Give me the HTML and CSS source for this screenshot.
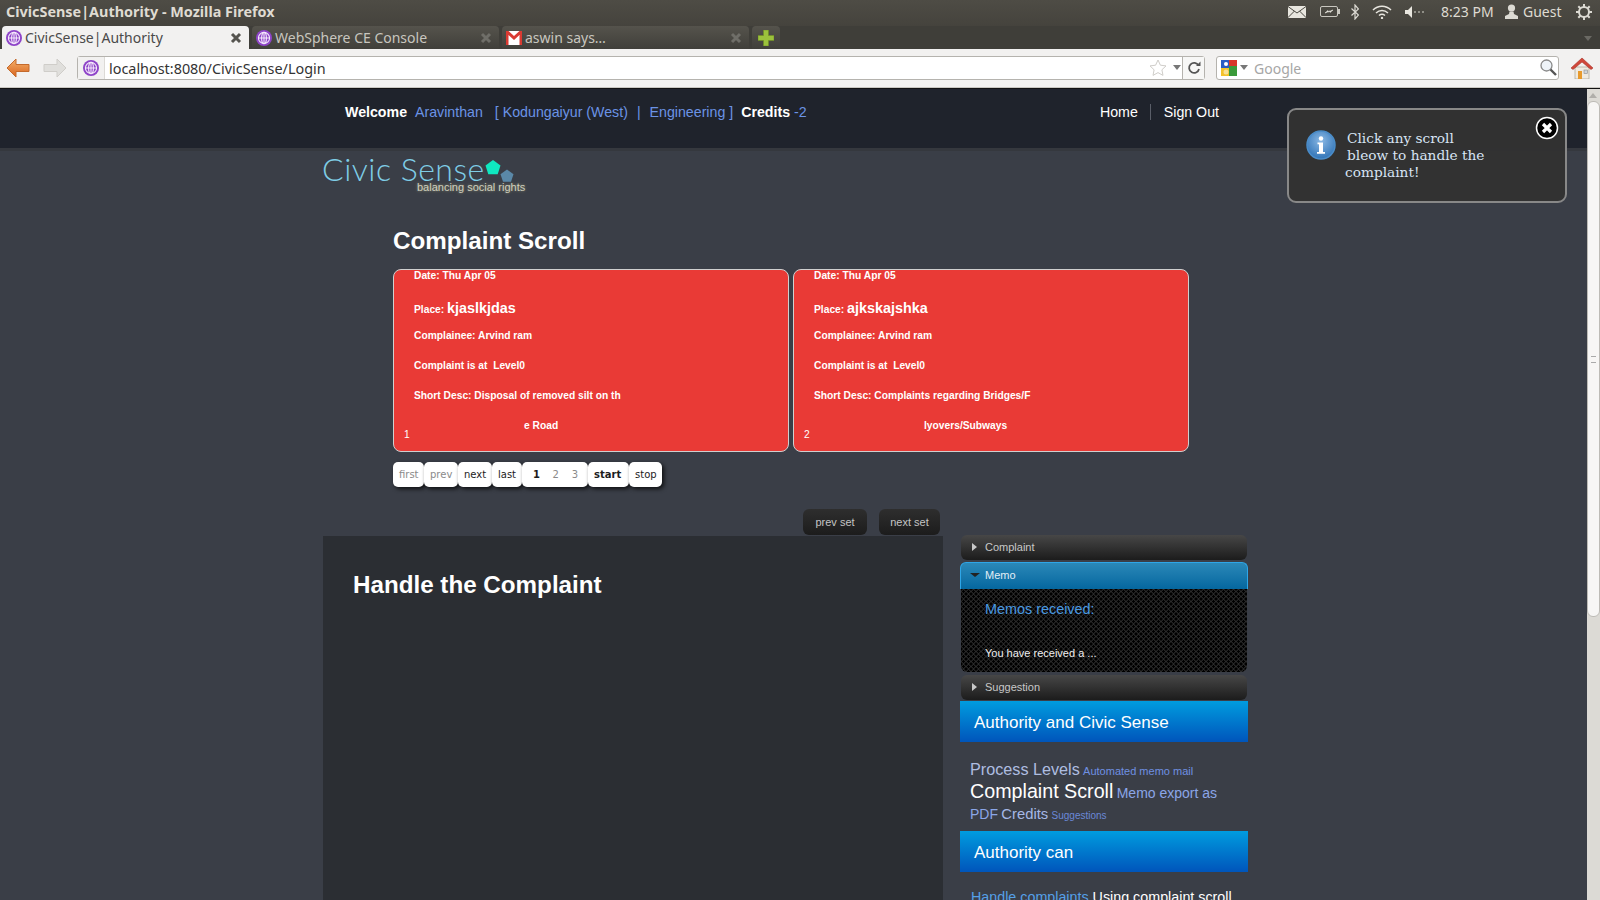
FILE: index.html
```html
<!DOCTYPE html>
<html lang="en">
<head>
    <meta charset="UTF-8">
    <meta name="viewport" content="width=device-width, initial-scale=1.0">
    <title>CivicSense|Authority</title>
    <link rel="stylesheet" href="styles.css">
</head>
<body>
    <svg class="defs" width="0" height="0">
        <symbol id="globe" viewBox="0 0 16 16">
            <circle cx="8" cy="8" r="8" fill="#8e44c8"/>
            <circle cx="8" cy="8" r="5.6" fill="none" stroke="#f4e8fb" stroke-width="1.1"/>
            <ellipse cx="8" cy="8" rx="2.4" ry="5.6" fill="none" stroke="#f4e8fb" stroke-width="1.1"/>
            <path d="M2.4 8h11.2M8 2.4v11.2" stroke="#f4e8fb" stroke-width="1.1"/>
        </symbol>
        <symbol id="closer" viewBox="0 0 12 12">
            <path d="M2 2l8 8M10 2l-8 8" stroke="currentColor" stroke-width="3"/>
        </symbol>
    </svg>

    <!-- desktop panel + window title -->
    <div class="titlebar">
        <span class="window-title">CivicSense|Authority - Mozilla Firefox</span>
        <div class="tray">
            <svg class="tray-mail" width="18" height="12" viewBox="0 0 18 12"><rect width="18" height="12" rx="1" fill="#e8e6df"/><path d="M0 .5l9 6.5 9-6.5M0 11.5l6.5-6.5M18 11.5l-6.5-6.5" fill="none" stroke="#4a4842"/></svg>
            <svg class="tray-batt" width="20" height="11" viewBox="0 0 20 11"><rect x=".5" y=".5" width="17" height="10" rx="1.5" fill="none" stroke="#c8c6bf"/><rect x="18" y="3" width="2" height="5" fill="#c8c6bf"/><path d="M5 7l5-2v1.500l3-2.500-5 2v-1.500z" fill="#e8e6df" stroke="#e8e6df" stroke-width=".6"/></svg>
            <svg class="tray-bt" width="8" height="16" viewBox="0 0 8 16"><path d="M.5 4.500l7 6.500-3.500 4v-14l3.500 4-7 6.500" fill="none" stroke="#dcdad3" stroke-width="1.200"/></svg>
            <svg class="tray-wifi" width="20" height="14" viewBox="0 0 20 14"><path d="M1 5c5-5 13-5 18 0M4 8c3.500-3.300 8.500-3.300 12 0M7 10.500c1.800-1.500 4.200-1.500 6 0" fill="none" stroke="#e8e6df" stroke-width="1.500"/><circle cx="10" cy="13" r="1.200" fill="#e8e6df"/></svg>
            <svg class="tray-vol" width="20" height="12" viewBox="0 0 20 12"><path d="M0 4h3l4-4v12l-4-4H0z" fill="#e8e6df"/><path d="M9 6h2M13 6h2M17 6h2" stroke="#a8a69f" stroke-width="1.300"/></svg>
            <span class="tray-time">8:23 PM</span>
            <svg class="tray-user" width="13" height="15" viewBox="0 0 13 15"><circle cx="6.500" cy="4" r="3.600" fill="#dcdad3"/><path d="M4.500 7.500h4l.5 2.500 4 2v3H0v-3l4-2z" fill="#dcdad3"/></svg>
            <span class="tray-guest">Guest</span>
            <svg class="tray-gear" width="16" height="16" viewBox="0 0 16 16"><circle cx="8" cy="8" r="5" fill="none" stroke="#dcdad3" stroke-width="2"/><path d="M8 0v3M8 13v3M0 8h3M13 8h3M2.300 2.300l2 2M11.700 11.700l2 2M13.700 2.300l-2 2M4.300 11.700l-2 2" stroke="#dcdad3" stroke-width="2"/></svg>
        </div>
    </div>

    <div class="tabbar">
        <div class="tab tab-active">
            <svg class="favicon" width="16" height="16"><use href="#globe"/></svg>
            <span class="tab-label">CivicSense|Authority</span>
            <svg class="tab-close" width="12" height="12"><use href="#closer"/></svg>
        </div>
        <div class="tab">
            <svg class="favicon" width="16" height="16"><use href="#globe"/></svg>
            <span class="tab-label">WebSphere CE Console</span>
            <svg class="tab-close" width="12" height="12"><use href="#closer"/></svg>
        </div>
        <div class="tab tab-mail">
            <svg class="favicon" width="16" height="14" viewBox="0 0 16 14"><rect width="16" height="14" fill="#fff"/><path d="M0 0h2.500L8 5l5.500-5H16v14h-2.500V4L8 9 2.500 4v10H0z" fill="#d93a32"/></svg>
            <span class="tab-label">aswin says…</span>
            <svg class="tab-close" width="12" height="12"><use href="#closer"/></svg>
        </div>
        <div class="tab-new">
            <svg width="16" height="16" viewBox="0 0 16 16"><path d="M5.500 0h5v5.500H16v5h-5.500V16h-5v-5.500H0v-5h5.500z" fill="#9cc23c" stroke="#6e8f22" stroke-width=".6"/></svg>
        </div>
        <span class="tab-list"></span>
    </div>

    <div class="navbar">
        <svg class="nav-back" width="24" height="20" viewBox="0 0 24 20"><defs><linearGradient id="arrowFill" x1="0" y1="0" x2="0" y2="1"><stop offset="0" stop-color="#f4b06a"/><stop offset="1" stop-color="#d9641e"/></linearGradient></defs><path d="M10 1L1 10l9 9v-5.500h13v-7H10z" fill="url(#arrowFill)" stroke="#c46a2c" stroke-linejoin="round"/></svg>
        <svg class="nav-forward" width="24" height="20" viewBox="0 0 24 20"><path d="M14 1l9 9-9 9v-5.500H1v-7h13z" fill="#e0dfdc" stroke="#cfcdc9" stroke-linejoin="round"/></svg>
        <div class="urlbar">
            <span class="url-site"><svg width="16" height="16"><use href="#globe"/></svg></span>
            <span class="url-text">localhost:8080/CivicSense/Login</span>
            <svg class="url-star" width="18" height="17" viewBox="0 0 18 17"><path d="M9 1l2.400 5.200 5.600.7-4.100 3.900 1.100 5.600L9 13.600l-5 2.800 1.100-5.600L1 6.900l5.600-.7z" fill="#fff" stroke="#cfcdc9"/></svg>
            <span class="drop-arrow"></span>
            <span class="url-reload">
                <svg width="14" height="14" viewBox="0 0 14 14"><path d="M11.500 4.500A5 5 0 1 0 12 8" fill="none" stroke="#555" stroke-width="1.800"/><path d="M9 5h4.500V.5z" fill="#555"/></svg>
            </span>
        </div>
        <div class="searchbar">
            <svg class="search-engine" width="16" height="16" viewBox="0 0 16 16"><rect width="8" height="8" fill="#2a5cc4"/><rect x="8" width="8" height="6" fill="#d8362a"/><rect x="8" y="6" width="8" height="10" fill="#3a9a3a"/><rect y="8" width="8" height="8" fill="#f4c22c"/><circle cx="5" cy="4" r="2" fill="#fff"/><circle cx="5" cy="12" r="2.500" fill="#fff" opacity=".5"/></svg>
            <span class="drop-arrow"></span>
            <span class="search-text">Google</span>
            <svg class="search-icon" width="17" height="17" viewBox="0 0 17 17"><circle cx="6.500" cy="6.500" r="5.500" fill="#eef3f8" stroke="#8a8a8a" stroke-width="1.300"/><path d="M10.500 10.500l5.500 5.500" stroke="#555" stroke-width="2.400"/></svg>
        </div>
        <svg class="nav-home" width="22" height="22" viewBox="0 0 22 22"><path d="M4 10h14v12H4z" fill="#efeae0" stroke="#a8a294" stroke-width=".7"/><rect x="7" y="14" width="4" height="8" fill="#e89a2c"/><rect x="13" y="13" width="3.500" height="3.500" fill="#cfd4d8" stroke="#8a8a8a" stroke-width=".6"/><path d="M0 11L11 1l11 10-2 1.500L11 5l-9 7.500z" fill="#d0473a" stroke="#a83228" stroke-width=".6"/></svg>
    </div>

    <div class="viewport">
        <div class="page">
            <header class="topbar">
                <div class="topbar-inner">
                    <div class="user-info">
                        <b>Welcome</b>
                        <a class="link user-name">Aravinthan</a>
                        <a class="link user-ward">[ Kodungaiyur (West)</a>
                        <a class="link user-sep">|</a>
                        <a class="link user-dept">Engineering ]</a>
                        <b class="credits">Credits</b>
                        <a class="link user-credits">-2</a>
                    </div>
                    <nav class="top-links">
                        <a>Home</a>
                        <span class="top-sep"></span>
                        <a>Sign Out</a>
                    </nav>
                </div>
            </header>

            <div class="content">
                <div class="logo">
                    <span class="logo-name">Civic Sense</span>
                    <svg class="logo-mark" width="36" height="26" viewBox="0 0 36 26"><path d="M8 1l7.500 5.500-2.800 8.800H3.300L.5 6.500z" fill="#0fe8c0"/><path d="M22 10.500l6.500 4.700-2.500 7.600h-8l-2.500-7.600z" fill="#5a88a8"/></svg>
                    <span class="logo-tag">balancing social rights</span>
                </div>

                <section class="scroll-section">
                    <h2 class="scroll-title">Complaint Scroll</h2>
                    <div class="scroll-cards">
                        <article class="scroll-card">
                            <p class="card-date">Date: Thu Apr 05</p>
                            <p class="card-place">Place: <strong>kjaslkjdas</strong></p>
                            <p>Complainee: Arvind ram</p>
                            <p>Complaint is at &nbsp;Level0</p>
                            <p>Short Desc: Disposal of removed silt on th</p>
                            <p class="card-wrap">e Road</p>
                            <span class="card-num">1</span>
                        </article>
                        <article class="scroll-card">
                            <p class="card-date">Date: Thu Apr 05</p>
                            <p class="card-place">Place: <strong>ajkskajshka</strong></p>
                            <p>Complainee: Arvind ram</p>
                            <p>Complaint is at &nbsp;Level0</p>
                            <p>Short Desc: Complaints regarding Bridges/F</p>
                            <p class="card-wrap">lyovers/Subways</p>
                            <span class="card-num">2</span>
                        </article>
                    </div>
                    <div class="pager">
                        <a class="pg pg-off">first</a>
                        <a class="pg pg-off">prev</a>
                        <a class="pg">next</a>
                        <a class="pg">last</a>
                        <span class="pg pg-nums">
                            <b>1</b>
                            <i>2</i>
                            <i>3</i>
                        </span>
                        <a class="pg pg-start">start</a>
                        <a class="pg">stop</a>
                    </div>
                </section>

                <div class="set-buttons">
                    <button class="set-btn set-prev">prev set</button>
                    <button class="set-btn set-next">next set</button>
                </div>

                <div class="lower">
                    <main class="handle-panel">
                        <h2>Handle the Complaint</h2>
                    </main>
                    <aside class="sidebar">
                        <div class="acc-head"><span class="tri-right"></span>Complaint</div>
                        <div class="acc-head acc-open"><span class="tri-down"></span>Memo</div>
                        <div class="acc-body">
                            <h4>Memos received:</h4>
                            <p>You have received a ...</p>
                        </div>
                        <div class="acc-head acc-last"><span class="tri-right"></span>Suggestion</div>

                        <h3 class="side-title">Authority and Civic Sense</h3>
                        <div class="tag-cloud">
                            <a class="tag-md">Process Levels</a>
                            <a class="tag-xs">Automated memo mail</a>
                            <a class="tag-lg">Complaint Scroll</a>
                            <a class="tag-sm">Memo export as PDF</a>
                            <a class="tag-cr">Credits</a>
                            <a class="tag-xxs">Suggestions</a>
                        </div>

                        <h3 class="side-title">Authority can</h3>
                        <p class="can-list"><a>Handle complaints</a> Using complaint scroll</p>
                    </aside>
                </div>
            </div>

            <div class="notice">
                <svg class="notice-icon" width="30" height="30" viewBox="0 0 30 30"><defs><radialGradient id="infoFill" cx=".5" cy=".35" r=".7"><stop offset="0" stop-color="#8ab8e4"/><stop offset="1" stop-color="#2a6fb4"/></radialGradient></defs><circle cx="15" cy="15" r="14" fill="url(#infoFill)" stroke="#4a8cc8" stroke-width="1.500"/><circle cx="15" cy="8.500" r="2.200" fill="#fff"/><path d="M11.500 12.500h5.500v9.500h2v1.800h-8V22h2v-7.700h-1.500z" fill="#fff"/></svg>
                <div class="notice-text">
                    <span class="notice-line">Click any scroll</span>
                    <span class="notice-line">bleow to handle the</span>
                    <span>complaint!</span>
                </div>
                <svg class="notice-close" width="24" height="24" viewBox="0 0 24 24"><circle cx="12" cy="12" r="10.500" fill="#000" stroke="#fff" stroke-width="1.500"/><path d="M8 8l8 8M16 8l-8 8" stroke="#fff" stroke-width="3.200"/></svg>
            </div>
        </div>

        <div class="scrollbar">
            <span class="scroll-up"></span>
            <div class="scroll-thumb"><span class="scroll-grip"></span></div>
        </div>
    </div>
</body>
</html>
```

FILE: styles.css
```css
* {
    margin: 0;
    padding: 0;
    box-sizing: border-box;
}

body {
    width: 1600px;
    height: 900px;
    overflow: hidden;
    display: flex;
    flex-direction: column;
    font-family: 'Liberation Sans', Arial, sans-serif;
    background-color: #3a3e47;
}

.defs {
    position: absolute;
}

/* ---- browser chrome ---- */
.titlebar {
    height: 26px;
    display: flex;
    justify-content: space-between;
    align-items: center;
    padding: 0 0 3px 6px;
    background: linear-gradient(#4e4c45, #45433d);
}

.window-title {
    font-family: 'Noto Sans', sans-serif;
    font-size: 14.4px;
    font-weight: 700;
    color: #dfdbd2;
}

.tray {
    display: flex;
    align-items: center;
    font-family: 'Noto Sans', sans-serif;
    font-size: 14px;
    color: #dfdbd2;
}

.tray-mail { margin-right: 14px; }
.tray-batt { margin-right: 11px; }
.tray-bt { margin-right: 13px; }
.tray-wifi { margin-right: 13px; }
.tray-vol { margin-right: 16px; }
.tray-time { width: 64px; }
.tray-user { margin-right: 5px; }
.tray-guest { width: 53px; }
.tray-gear { margin-right: 8px; }

.tabbar {
    height: 23px;
    display: flex;
    gap: 3px;
    padding-left: 2px;
    position: relative;
    background-color: #3f3e39;
}

.tab {
    width: 247px;
    display: flex;
    align-items: center;
    gap: 3px;
    padding: 0 7px 0 4px;
    border-radius: 4px 4px 0 0;
    background: linear-gradient(#55534c, #403f3a);
    font-family: 'Noto Sans', sans-serif;
    font-size: 14px;
    color: #c8c6bf;
}

.tab-active {
    background: #f2f1f0;
    color: #4a4a4a;
}

.tab-label {
    flex: 1;
    white-space: nowrap;
}

.tab-close {
    color: #6f6e68;
}

.tab-active .tab-close {
    color: #55544f;
}

.tab-new {
    width: 28px;
    display: flex;
    align-items: center;
    justify-content: center;
    border-radius: 4px 4px 0 0;
    background: linear-gradient(#55534c, #403f3a);
}

.tab-list {
    position: absolute;
    right: 8px;
    top: 10px;
    border-left: 4px solid transparent;
    border-right: 4px solid transparent;
    border-top: 5px solid #6a6963;
}

.navbar {
    height: 39px;
    display: flex;
    align-items: center;
    padding: 0 7px 1px 6px;
    background-color: #f2f1f0;
    border-bottom: 1px solid #c9c7c2;
}

.nav-back { margin-right: 13px; }
.nav-forward { margin-right: 10px; }

.urlbar,
.searchbar {
    height: 24px;
    display: flex;
    align-items: center;
    background-color: #fff;
    border: 1px solid #b5b3ae;
    border-radius: 3px;
}

.urlbar {
    width: 1128px;
    margin-right: 11px;
}

.url-site {
    width: 27px;
    height: 100%;
    display: flex;
    align-items: center;
    justify-content: center;
    background-color: #f2f1f0;
    border-right: 1px solid #dcdad6;
}

.url-text {
    flex: 1;
    padding: 1px 0 0 4px;
    font-family: 'Noto Sans', sans-serif;
    font-size: 14.4px;
    color: #333;
}

.url-star { margin-right: 6px; }

.drop-arrow {
    border-left: 4px solid transparent;
    border-right: 4px solid transparent;
    border-top: 5px solid #777;
}

.url-reload {
    width: 22px;
    height: 100%;
    margin-left: 1px;
    display: flex;
    align-items: center;
    justify-content: center;
    border-left: 1px solid #b5b3ae;
    background-color: #f7f7f6;
}

.searchbar {
    width: 343px;
    padding: 0 1px 0 4px;
    margin-right: 12px;
}

.search-engine { margin-right: 3px; }

.search-text {
    flex: 1;
    padding: 1px 0 0 6px;
    font-family: 'Noto Sans', sans-serif;
    font-size: 14px;
    color: #a6a6a6;
}

/* ---- page ---- */
.viewport {
    flex: 1;
    min-height: 0;
    display: flex;
    border-top: 1px solid #111;
}

.page {
    flex: 1;
    position: relative;
    overflow: hidden;
    background-color: #3a3e47;
}

.topbar {
    height: 62px;
    background-color: #1f232c;
    border-bottom: 3px solid #35383e;
}

.topbar-inner {
    width: 874px;
    margin-left: 345px;
    height: 46px;
    display: flex;
    justify-content: space-between;
    align-items: center;
    font-size: 14.2px;
    color: #fff;
}

.user-info {
    display: flex;
    align-items: center;
    white-space: nowrap;
}

.link {
    color: #6b93e6;
}

.user-name { margin-left: 8px; }
.user-ward { margin-left: 12px; }
.user-sep { margin-left: 9px; }
.user-dept { margin-left: 9px; }
.credits { margin-left: 8px; }
.user-credits { margin-left: 4px; }

.top-links {
    display: flex;
    align-items: center;
}

.top-sep {
    width: 1px;
    height: 16px;
    margin: 0 12.5px;
    background-color: #5a5e68;
}

.content {
    width: 925px;
    margin-left: 323px;
}

.logo {
    height: 75px;
    position: relative;
}

.logo-name {
    position: absolute;
    left: -1px;
    top: -2px;
    font-family: 'Lato', sans-serif;
    font-size: 32px;
    font-weight: 300;
    letter-spacing: .5px;
    color: #7fcde6;
}

.logo-mark {
    position: absolute;
    left: 162px;
    top: 8px;
}

.logo-tag {
    position: absolute;
    left: 94px;
    top: 30px;
    font-size: 11px;
    color: #cfcfbf;
    text-shadow: 0 0 3px #8f8f70;
}

.scroll-section {
    margin-left: 70px;
}

.scroll-title {
    font-size: 24.2px;
    line-height: 30px;
    color: #fff;
    margin-bottom: 13px;
}

.scroll-cards {
    display: flex;
    gap: 4px;
}

.scroll-card {
    width: 396px;
    height: 183px;
    position: relative;
    overflow: hidden;
    padding: 1px 20px 0;
    background-color: #e93a36;
    border: 1px solid #cfcfcf;
    border-radius: 8px;
    font-size: 10.25px;
    font-weight: 700;
    line-height: 10px;
    color: #fff;
}

.scroll-card p {
    margin-bottom: 20px;
}

.scroll-card .card-date {
    margin-bottom: 18px;
}

.scroll-card .card-place {
    line-height: 18px;
    margin-bottom: 12px;
}

.card-place strong {
    font-size: 14.4px;
}

.card-wrap {
    padding-left: 110px;
}

.card-num {
    position: absolute;
    left: 10px;
    bottom: 11px;
    font-weight: 400;
}

.pager {
    display: flex;
    height: 25px;
    margin-top: 10px;
    font-family: 'DejaVu Sans', sans-serif;
    font-size: 10px;
    color: #1c1c1c;
}

.pg {
    display: flex;
    align-items: center;
    padding: 0 6px;
    background-color: #fff;
    border-radius: 5px;
    box-shadow: 2px 2px 4px rgba(0, 0, 0, .75);
}

.pg:nth-child(1) { width: 31px; }
.pg:nth-child(2) { width: 34px; }
.pg:nth-child(3) { width: 34px; }
.pg:nth-child(4) { width: 30px; }
.pg:nth-child(7) { width: 33px; }

.pg-off {
    color: #8a8a8a;
}

.pg-nums {
    width: 66px;
    justify-content: space-between;
    padding: 0 10px 0 11px;
}

.pg-nums i {
    font-style: normal;
    color: #8a8a8a;
}

.pg-start {
    width: 41px;
    font-weight: 700;
}

.set-buttons {
    display: flex;
    justify-content: flex-end;
    gap: 12px;
    height: 26px;
    margin-top: 22px;
    padding-right: 308px;
}

.set-btn {
    height: 26px;
    border: none;
    border-radius: 6px;
    background: linear-gradient(#2e2e2e, #1c1c1c);
    font-family: 'Liberation Sans', sans-serif;
    font-size: 11px;
    color: #c4c4c4;
}

.set-prev { width: 64px; }
.set-next { width: 61px; }

.lower {
    display: flex;
    margin-top: 1px;
    gap: 17px;
}

.handle-panel {
    width: 620px;
    height: 400px;
    padding: 34px 30px;
    background-color: #2b2e33;
}

.handle-panel h2 {
    font-size: 24.2px;
    line-height: 30px;
    color: #fff;
}

.sidebar {
    width: 288px;
    margin-top: -1px;
}

.acc-head {
    height: 25px;
    margin: 0 1px 2px;
    display: flex;
    align-items: center;
    padding: 0 0 2px 11px;
    border-radius: 6px;
    background: linear-gradient(#474747, #1c1c1c);
    font-size: 11px;
    color: #c8c8c8;
}

.tri-right {
    margin-right: 8px;
    border-top: 4px solid transparent;
    border-bottom: 4px solid transparent;
    border-left: 5px solid #c8c8c8;
}

.tri-down {
    margin-right: 5px;
    margin-left: -3px;
    border-left: 5px solid transparent;
    border-right: 5px solid transparent;
    border-top: 4px solid #222;
}

.acc-open {
    height: 27px;
    margin: 0;
    padding-left: 12px;
    border: 1px solid #2ea6e8;
    border-bottom: none;
    border-radius: 6px 6px 0 0;
    background: linear-gradient(#2b88b8, #05679f);
    color: #e2eef6;
}

.acc-body {
    height: 83px;
    margin: 0 1px 3px;
    padding: 12px 24px 0;
    border-radius: 0 0 6px 6px;
    background-color: #000;
    background-image: radial-gradient(circle at center, #000 1px, #2a2a2a 1.5px, #2a2a2a 2px, transparent 2.5px);
    background-size: 5px 5px;
}

.acc-body h4 {
    font-size: 14.4px;
    font-weight: 400;
    line-height: 17px;
    color: #4a9ae2;
    margin-bottom: 28px;
}

.acc-body p {
    font-size: 11px;
    line-height: 14px;
    color: #efefef;
}

.acc-last {
    margin-bottom: 1px;
}

.side-title {
    height: 41px;
    padding: 2px 0 0 14px;
    display: flex;
    align-items: center;
    background: linear-gradient(#009cdf, #0055bb);
    font-size: 17px;
    font-weight: 400;
    color: #fff;
}

.tag-cloud {
    height: 89px;
    padding: 17px 10px 0;
    font-size: 12px;
    line-height: 20px;
    color: #7f9be6;
}

.tag-md { font-size: 16.2px; color: #aebde0; }
.tag-xs { font-size: 11px; color: #6f90e2; }
.tag-lg { font-size: 19.7px; color: #fff; }
.tag-sm { font-size: 14px; color: #8ba6e8; }
.tag-cr { font-size: 14.8px; color: #a6b8e6; }
.tag-xxs { font-size: 10px; color: #6a88d8; }

.can-list {
    padding: 17px 11px 0;
    font-size: 14.3px;
    color: #fff;
    white-space: nowrap;
}

.can-list a {
    color: #55a0e8;
}

/* floating notification, sits over the page */
.notice {
    position: absolute;
    left: 1287px;
    top: 19px;
    width: 280px;
    height: 95px;
    display: flex;
    padding: 20px 0 0 17px;
    background-color: rgba(50, 50, 50, .97);
    border: 2px solid #888;
    border-radius: 9px;
}

.notice-text {
    display: flex;
    flex-direction: column;
    margin-left: 9px;
    font-family: 'DejaVu Serif', serif;
    font-size: 13.7px;
    line-height: 17px;
    color: #d8e4f4;
}

.notice-line {
    padding-left: 2px;
}

.notice-close {
    position: absolute;
    right: 6px;
    top: 6px;
}

.scrollbar {
    width: 13px;
    position: relative;
    background-color: #dcdad5;
}

.scroll-up {
    position: absolute;
    left: 2px;
    top: 4px;
    border-left: 4px solid transparent;
    border-right: 4px solid transparent;
    border-bottom: 5px solid #b0aeaa;
}

.scroll-thumb {
    position: absolute;
    top: 12px;
    left: 0;
    width: 13px;
    height: 516px;
    display: flex;
    align-items: center;
    justify-content: center;
    background-color: #f7f6f5;
    border: 1px solid #bdbbb6;
    border-radius: 6px;
}

.scroll-grip {
    width: 5px;
    height: 7px;
    border-top: 1px solid #aaa;
    border-bottom: 1px solid #aaa;
}
```
